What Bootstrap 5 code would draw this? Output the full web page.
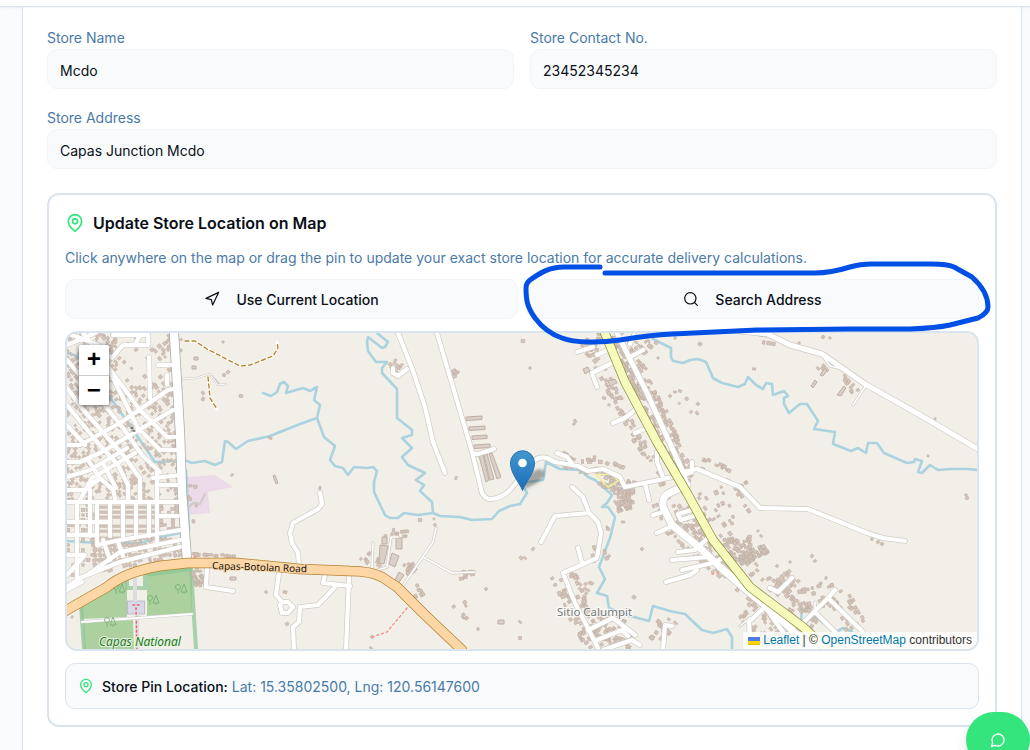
<!DOCTYPE html>
<html lang="en">
<head>
<meta charset="utf-8">
<meta name="viewport" content="width=device-width, initial-scale=1">
<title>Store Settings</title>
<link href="https://cdn.jsdelivr.net/npm/bootstrap@5.3.0/dist/css/bootstrap.min.css" rel="stylesheet">
<style>
:root{--line:#d9e4ee;--soft:#f8fafc;--blue:#4a7aa8;--ink:#0b0f17;--green:#33e57c}
body{font-family:Inter,"Liberation Sans",sans-serif;font-size:14px;line-height:20px;color:var(--ink);background:var(--soft)}
.topbar{height:7px;background:#fff;border-bottom:1px solid var(--line);box-shadow:0 1px 2px rgba(30,60,90,.06);position:relative}
.page-wrap{padding:0 8px 0 22px}
.panel{background:#fff;border:solid var(--line);border-width:0 1px;padding:20px 24px 0}
.field-label{display:block;line-height:22px;color:var(--blue)}
.field-input{height:40px;padding:2px 12px 0;border:1px solid #f1f5f9;border-radius:10px;background:var(--soft);font-size:14px;color:var(--ink)}
.field-grid{row-gap:18px}
.map-card{margin-top:24px;padding:16px;border:2px solid var(--line);border-radius:12px}
.map-title{font-size:16px;line-height:24px;font-weight:600}
.map-help{margin:12px 0 10px;line-height:22px;color:var(--blue)}
.soft-btn{height:40px;padding:0;border:1px solid #f1f5f9;border-radius:10px;background:var(--soft);font-size:14px;font-weight:500;color:var(--ink)}
.soft-btn span{padding-top:2px}
.ico{fill:none;stroke:currentColor;stroke-width:2;stroke-linecap:round;stroke-linejoin:round;flex:none}
.soft-btn .ico{stroke-width:1.8}
.pin-ico{color:var(--green)}
.marker-line{left:0;top:0;overflow:visible;pointer-events:none;z-index:5}
.map-box{height:320px;margin-top:12px;border:2px solid var(--line);border-radius:12px;background:#f2efe9}
.zoom-ctl{left:12px;top:12px;width:30px;border-radius:2px;box-shadow:0 1px 5px rgba(0,0,0,.65)}
.zoom-ctl button{height:30px;padding:2px 0 0;border:0;background:#fff;color:#000;font:bold 24px/28px "Liberation Mono",monospace;border-radius:2px}
.zoom-ctl button+button{border-top:1px solid #ccc;border-radius:0 0 2px 2px}
.credit{right:0;bottom:0;padding:0 5px;background:rgba(255,255,255,.8);font:12px/17px "Liberation Sans",sans-serif;color:#333}
.credit a{color:#0078a8;text-decoration:none}
.pin-box{margin-top:12px;padding:12px;border:1px solid var(--line);border-radius:10px;background:var(--soft)}
.pin-text{line-height:18px;padding-top:2px;color:var(--blue)}
.pin-text strong{font-weight:500;color:var(--ink)}
.chat-btn{right:0;bottom:-18px;width:64px;height:56px;border:0;border-radius:28px;background:var(--green);color:#fff;box-shadow:0 8px 14px rgba(0,0,0,.12);z-index:10}
/* map drawing */
.ground .lines path,.ground .lines use{fill:none;stroke-linecap:round;stroke-linejoin:round}
.water{stroke:#aad3df;stroke-width:2.6}
.casing{stroke:#cfccc7}.street{stroke:#fff}
.place{font-family:"Noto Sans","Open Sans",sans-serif;paint-order:stroke;stroke-linejoin:round}
</style>
</head>
<body>
<div class="d-flex flex-column min-vh-100">
<header class="topbar"></header>
<div class="page-wrap d-flex flex-column flex-grow-1">
<main class="panel flex-grow-1">
<div class="row gx-3 field-grid">
  <div class="col-6"><label class="field-label" for="name">Store Name</label><input class="field-input w-100 d-block" id="name" type="text" value="Mcdo"></div>
  <div class="col-6"><label class="field-label" for="phone">Store Contact No.</label><input class="field-input w-100 d-block" id="phone" type="text" value="23452345234"></div>
  <div class="col-12"><label class="field-label" for="addr">Store Address</label><input class="field-input w-100 d-block" id="addr" type="text" value="Capas Junction Mcdo"></div>
</div>
<section class="map-card">
  <div class="d-flex align-items-center gap-2">
    <svg class="ico pin-ico" width="20" height="20" viewBox="0 0 24 24"><path d="M20 10c0 6-8 12-8 12s-8-6-8-12a8 8 0 0 1 16 0Z"/><circle cx="12" cy="10" r="3"/></svg>
    <h2 class="map-title m-0">Update Store Location on Map</h2>
  </div>
  <p class="map-help">Click anywhere on the map or drag the pin to update your exact store location for accurate delivery calculations.</p>
  <div class="d-flex gap-2 position-relative">
    <button type="button" class="soft-btn flex-fill w-50 d-flex align-items-center justify-content-center gap-3"><svg class="ico" width="16" height="16" viewBox="0 0 24 24"><path d="M3 11 22 2l-9 19-2-8-8-2z"/></svg><span>Use Current Location</span></button>
    <button type="button" class="soft-btn flex-fill w-50 d-flex align-items-center justify-content-center gap-3"><svg class="ico" width="16" height="16" viewBox="0 0 24 24"><circle cx="11" cy="11" r="8.5"/><path d="m21.500 21.500-4.300-4.300"/></svg><span>Search Address</span></button>
    <svg class="marker-line position-absolute w-100 h-100" viewBox="65 279 914 40" preserveAspectRatio="none"><path fill="none" stroke="#0050e6" stroke-width="5" stroke-linecap="round" stroke-linejoin="round" d="M600 267H564C549 267 540 273 530 280Q526 283 526 288C526 302 528 308 535 318C541 326 550 334 562 338C575 343 600 343 620 340Q650 335 672 334L757 330 850 329 910 329Q936 328 950 325L978 318Q988 313 988 307C988 297 982 286 972 277L954 267Q947 264 932 264H872Q860 264 850 267C837 271 828 273 815 273H605"/></svg>
  </div>
  <div class="map-box position-relative overflow-hidden">
  <svg class="ground w-100 h-100 d-block" viewBox="67 333 910 316" preserveAspectRatio="xMidYMid slice">
    <rect x="67" y="333" width="910" height="316" fill="#f2efe9"/>
    <polygon points="187,477 215,475 233,487 208,492 210,513 188,515" fill="#ebdbe8"/>
    <g fill="#add19e"><polygon points="80,603 127,577 127,617 81,619"/><polygon points="147,572 192,567 192,613 147,616"/><polygon points="83,622 133,620 134,649 84,649"/></g>
    <path d="M84 649 81 604 127 579V588H145V575L191 569 196 649" fill="none" stroke="#8fc596" stroke-width="4" stroke-opacity=".75"/>
    <rect x="127.500" y="601" width="17" height="13" fill="#dad9e8" stroke="#b4b0c4" stroke-width=".8"/>
    <g class="lines">
    <path d="M135 577V600M137 614V649" stroke="#ddd" stroke-width="4"/><path d="M133 605h7M136 608 137 649" stroke="#f25e5e" stroke-width="1.500" stroke-dasharray="1.500 3"/>
    <path d="M82 622 192 614" stroke="#ccc" stroke-width="3"/><path d="M82 622 192 614" stroke="#fff" stroke-width="1.800"/>
    </g>
    <g stroke="#79b079" stroke-width=".9" fill="none">
      <g id="trees"><circle cx="116" cy="587" r="2.500"/><path d="M116 590v4M122 584l-3 8h6zM122 592v2"/></g>
      <use href="#trees" x="34" y="11"/><use href="#trees" x="62" y="0"/><use href="#trees" x="-9" y="33"/>
    </g>
    <g class="water lines">
      <path d="M67 353 77 356 110 397 133 430 155 462 177 461 187 461 192 463 205 461 215 465 222 462 225 441 228 442 236 449 248 441 270 436 300 424 317 418"/>
      <path d="M263 393 271 396 277 392 280 384 284 382 288 386 286 393 303 388 310 391 317 387 314 400 320 405 317 418 324 437 335 446 330 460 335 466 343 468 348 475 354 467 367 468 373 467 377 471 374 482 374 492 385 515 390 518 398 518 404 513 418 515 433 513 440 516 460 517 472 520 492 519 499 511 510 506 520 504 527 493 523 486 528 482 543 480 546 462 560 469 580 470 588 477 595 480 612 495 607 503 602 507 608 507 615 517 610 538 599 567 605 579 597 593 607 596 609 608 630 616 649 621 653 606 670 611 685 614 702 630 713 633 727 629 732 637V650"/>
      <path d="M377 333 388 342 385 347 382 348 368 337 367 342 368 351 376 362 387 362 382 368V373L397 389V418L412 430V435L402 438 412 448 402 457 408 465 425 473 416 480 424 485 420 491 432 502 433 513"/>
      <path d="M653 339 671 348V357L673 361 683 363 690 360 698 359 706 362 713 378 722 383 738 387 745 384 748 377 756 385 763 389 766 383 772 384 773 395 784 391 788 396 784 398V404L789 413 800 404 807 404 818 421 814 429 835 432 833 444 851 451 858 448 866 453 868 443 877 443 884 453 907 463 914 462 915 459 922 461 918 472 922 473 930 465 938 470 950 469 967 469 978 470"/>
      <path d="M67 541 97 543 140 543 160 537 180 533"/><path d="M801 620 802 609 812 613 823 623M836 632 843 628 852 632M186 470 189 530"/>
    </g>
    <g id="houses" fill="#d3c5bb" stroke="#bfaea2" stroke-width=".6"></g>
    <g fill="#d9d0c9" stroke="#bfaea2" stroke-width="1">
      <path d="M466 417l16-1v3.500l-16 1zM469 427l16-1v3.500l-16 1zM472 436l15-1v3.500l-15 1zM474 445l16-1v3.500l-16 1zM479 456l4-1 6 25-3 2zM484 455l3-1 7 25-4 1zM489 454l3-1 9 24-4 2z"/>
      <path d="M380 545l8 1-4 18-5-1zM396 538h6v11h-6zM392 553l7 3-4 11-6-3zM382 537h5v7h-5zM399 572l5 3-6 9-4-2zM811 386l4-6 2 2-4 6zM820 375l5-7 2 2-4 6zM837 395l7-9 2 2-5 8zM230 577h6v3h-6zM498 620h6v4h-6zM273 476l2-1 3 8-2 1zM194 357h4v3h-4zM192 366h4v3h-4zM583 369l5-2 2 4-5 3zM608 381l7-2 2 4-7 3z"/>
    </g>
    <path d="M596 475 608 487 618 481 612 474Z" fill="none" stroke="#f3ee9c" stroke-width="1.500"/>
    <g class="lines">
    <path d="M182 379 196 378 210 374 218 385 226 384M211 375l8 9M188 508l5-5 7 1 5-10" stroke="#cfcbc6" stroke-width="2"/><path d="M182 379 196 378 210 374 218 385 226 384" stroke="#fff" stroke-width="1"/>
    <path d="M185 341 195 341 207 349 240 366 250 365 273 356 278 348 277 342M208 377 210 398 217 409" stroke="#fff" stroke-width="2.600"/><path d="M185 341 195 341 207 349 240 366 250 365 273 356 278 348 277 342M208 377 210 398 217 409" stroke="#b08a34" stroke-width="1.400" stroke-dasharray="4 3"/>
    <path d="M407 608 387 632 372 637M712 574 720 572M166 551 168 551M194 557h4" stroke="#f58c80" stroke-width="1.300" stroke-dasharray="2 3"/>
    <defs>
      <path id="thin" d="M436 528 433 542 402 587M423 557 452 573 475 572M373 543 372 568M398 537H391L387 567 378 570M865 387 853 405M822 355 830 366 838 368M815 611 815 602M750 618 740 626"/>
      <path id="small" d="M398 333 412 368 425 407 433 442 445 473M407 369 398 376 393 373V368M437 333 453 387 472 452 482 493Q486 500 492 499 502 498 510 490L535 460Q540 456 547 458L555 462 578 466 588 471 603 469 620 477 625 487 673 477 683 472 697 469 740 487 760 508 808 509 867 533 883 538 905 541M472 453 478 454 494 449M557 453 567 457 573 465M320 493 322 504 318 509 293 523 290 533 292 543 298 553 299 565M325 575 323 583 350 586M349 577 346 650M335 587 318 605 300 607 299 622 293 627 294 650M207 568 206 587 233 591M279 573 276 595 282 602 288 602 293 607 288 613 282 613 280 605 282 602M572 487 583 497 589 513M541 542 555 516 589 513 598 522 601 533 597 558 563 573 575 603 598 648M578 548 582 563M588 630 613 618 635 635M597 640 622 630 628 636M603 650 632 640 640 645M663 650 665 625 672 626M653 515 663 512M657 533 670 527M678 552 695 550 708 538M672 560 708 557M682 570 713 563 723 558M666 582 690 575 697 570M692 510 678 514 681 520 697 515M645 483 649 500M577 352 593 347M597 387 592 373 612 363M613 423 625 418 635 410M635 433 647 428M657 452V462L663 477M643 350 630 357M692 462V472L684 475M630 344 634 335M597 355 608 350M770 588 778 592 792 578M803 623 828 598 835 590M828 598 863 632M750 640 749 622 765 607 783 632M815 612 837 634"/>
      <path id="mid" d="M617 333 647 393 683 472 687 485M740 331 768 334 790 345 822 354 865 384 920 415 978 449"/>
      <path id="grid" d="M83 333 140 410 167 437H177M110 372 138 428 160 450H177M67 360 98 397 123 428 142 455 160 472M67 388 85 412 123 455 140 478V500M67 405 97 442 118 465 128 485V500M67 425 85 445M67 445H80L120 423 168 390 178 388M67 462H80L100 453 173 410H178M67 477 90 470 127 448M80 500 92 478 135 453M67 490H85L100 478 113 490 116 502M104 465 116 488M88 460 100 478M67 502H180M67 522H110M67 535H97M157 470V502M157 485H182M153 478 182 475M77 502V580M90 490V536M97 505V545M110 502V536M123 502V536M136 502V536M149 502V536M157 502V545M157 516H178M87 575 120 552 180 540M67 587 80 578 120 562 180 547M67 555H85M97 545 120 540 180 530M110 560 103 540M123 556 118 542M67 575 85 555M67 590 82 582M113 335H148V345H123L112 358 100 350M140 335 135 345M149 357 150 398M158 365H175M167 375V385M98 345 67 333M67 345 95 333"/>
      <path id="ns" d="M174 333 180 433 182 492 187 560"/>
      <path id="se" d="M687 485 667 494Q662 498 663 507L672 525 700 548 720 567 750 593 767 607 790 628 812 650"/>
      <path id="orange" d="M60 614 107 587Q125 572 160 566L187 563H237L300 569 350 571Q370 571 382 577L397 587 423 613 462 650"/>
      <path id="yellow" d="M604 331 625 382 657 442 687 493 713 540 750 587 767 600 803 627 828 650"/>
    </defs>
    <g class="casing"><use href="#thin" stroke-width="3"/><use href="#small" stroke-width="5.600"/><use href="#mid" stroke-width="6.500"/><use href="#grid" stroke-width="5.200"/><use href="#ns" stroke-width="10" stroke="#aaa"/><use href="#se" stroke-width="8.500"/></g>
    <g class="street"><use href="#thin" stroke-width="1.600"/><use href="#small" stroke-width="4.200"/><use href="#mid" stroke-width="5"/><use href="#grid" stroke-width="4.200"/><use href="#ns" stroke-width="8.500"/><use href="#se" stroke-width="7"/></g>
    <use href="#orange" stroke="#b5812d" stroke-width="10.500"/><use href="#orange" stroke="#fcd6a4" stroke-width="9"/>
    <use href="#yellow" stroke="#8b8f3a" stroke-width="9.500"/><use href="#yellow" stroke="#f6fabb" stroke-width="8"/>
    <path d="M131 428h2M133 431h2" stroke="#222" stroke-width="1"/>
    </g>
    <g class="place">
      <text x="212" y="569" font-size="10" transform="rotate(2 212 569)" fill="#111" stroke="#fcd6a4" stroke-width="2">Capas-Botolan Road</text>
      <text x="99" y="646" font-size="12" font-style="italic" fill="#1b7a1b" stroke="#e9f3e4" stroke-width="2">Capas National</text>
      <text x="557" y="616" font-size="11.500" fill="#777" stroke="#fff" stroke-opacity=".7" stroke-width="2.500">Sitio Calumpit</text>
    </g>
    <defs><linearGradient id="pinfill" x1="0" y1="0" x2="0" y2="1"><stop offset="0" stop-color="#4498d0"/><stop offset="1" stop-color="#1a6cb8"/></linearGradient><filter id="haze"><feGaussianBlur stdDeviation="1.800"/></filter></defs>
    <path d="M523 490 529 476Q537 466 544 471 546 476 537 483Z" fill="#333" fill-opacity=".4" filter="url(#haze)"/>
    <path d="M522.500 490.500C520.500 484 510.500 474 510.500 463A12 12.300 0 0 1 534.500 463C534.500 474 524.500 484 522.500 490.500Z" fill="url(#pinfill)" stroke="#2b72ad" stroke-width="1"/><circle cx="522.500" cy="463" r="4.300" fill="#fff"/>
  </svg>
  <div class="zoom-ctl position-absolute d-flex flex-column"><button type="button" aria-label="Zoom in">+</button><button type="button" aria-label="Zoom out">−</button></div>
  <div class="credit position-absolute"><svg width="12" height="8" viewBox="0 0 12 8"><path fill="#4c7be1" d="M0 0h12v4H0z"/><path fill="#ffd500" d="M0 4h12v3H0z"/><path fill="#e0bc00" d="M0 7h12v1H0z"/></svg> <a href="#">Leaflet</a> | © <a href="#">OpenStreetMap</a> contributors</div>
  </div>
  <div class="pin-box d-flex align-items-center gap-2">
    <svg class="ico pin-ico" width="16" height="16" viewBox="0 0 24 24"><path d="M20 10c0 6-8 12-8 12s-8-6-8-12a8 8 0 0 1 16 0Z"/><circle cx="12" cy="10" r="3"/></svg>
    <div class="pin-text"><strong>Store Pin Location:</strong> Lat: 15.35802500, Lng: 120.56147600</div>
  </div>
</section>
</main>
</div>
</div>
<button type="button" class="chat-btn position-fixed d-flex align-items-center justify-content-center p-0" aria-label="Chat"><svg class="ico" width="16" height="16" viewBox="0 0 24 24"><path d="M7.900 20A9 9 0 1 0 4 16.100L2 22Z"/></svg></button>
<script src="https://cdn.jsdelivr.net/npm/bootstrap@5.3.0/dist/js/bootstrap.bundle.min.js"></script>
<script>
// Building footprints: scattered along streets and inside town blocks.
let seed = 7;
const rnd = () => (seed = (seed * 16807) % 2147483647) / 2147483647;
const out = [];
function house(x, y, a, s) {
  const w = s * (0.7 + rnd() * 0.8), h = s * (0.7 + rnd() * 0.6);
  out.push(`<rect x="${(-w/2).toFixed(1)}" y="${(-h/2).toFixed(1)}" width="${w.toFixed(1)}" height="${h.toFixed(1)}" transform="translate(${x.toFixed(1)} ${y.toFixed(1)}) rotate(${a.toFixed(0)})"/>`);
}
// [points, spread, houses per pixel, nearest distance]
const rows = [
  [[590,333, 612,363, 625,392, 657,450, 680,487], 16, .85, 6],
  [[617,333, 647,393, 683,472], 10, .9, 3],
  [[583,336, 600,342], 10, .8, 0], [[636,340, 650,350], 8, .6, 0],
  [[690,500, 715,540, 745,577, 775,600, 810,628], 17, .9, 5],
  [[663,500, 672,525, 700,548, 730,575], 11, .5, 4],
  [[722,552, 752,548], 12, 1.5, 0], [[740,560, 768,547], 5, 1.6, 0],
  [[555,458, 580,465, 603,465, 622,475], 8, .6, 3],
  [[600,478, 618,486], 7, 1.3, 0], [[615,490, 634,492], 11, 3, 0], [[620,500, 626,510], 7, 2, 0],
  [[563,573, 575,603, 598,648], 12, .8, 3],
  [[600,560, 597,545], 7, .4, 2], [[582,580, 592,590], 8, .5, 0],
  [[595,622, 635,640], 13, 1.3, 0], [[655,640, 665,622, 675,630], 7, .8, 2],
  [[745,605, 780,645], 14, 1.2, 3], [[780,590, 795,575], 9, 1.1, 2],
  [[800,600, 835,592, 855,628], 12, .7, 2], [[790,605, 815,625], 8, .6, 2],
  [[755,336, 775,340], 5, .4, 2], [[697,462, 745,482], 7, .35, 4], [[740,485, 755,510], 7, .3, 3],
  [[392,362, 400,370], 5, .8, 0], [[452,370, 456,377], 4, .8, 0],
  [[362,555, 380,568], 7, .5, 0], [[405,560, 412,572], 5, 1, 0], [[415,585, 422,600], 5, .4, 0],
  [[386,532, 412,536], 4, .4, 0], [[455,600, 470,622], 7, .25, 0], [[455,577, 475,574], 4, .4, 0],
  [[820,366, 826,372], 3, .7, 0], [[845,376, 856,392], 5, .5, 0],
  [[192,558, 235,560], 5, .8, 3], [[195,570, 202,585], 6, 1.8, 0],
  [[660,390, 690,420], 18, .08, 4], [[700,480, 720,530], 18, .25, 6],
  [[190,480, 193,535], 6, .12, 0]
];
for (const [p, spread, dens, near] of rows)
  for (let i = 0; i + 3 < p.length; i += 2) {
    const dx = p[i+2]-p[i], dy = p[i+3]-p[i+1], len = Math.hypot(dx, dy), ang = Math.atan2(dy, dx);
    for (let k = 0; k < len * dens; k++) {
      const t = rnd(), d = (near + rnd() * (spread - near)) * (rnd() < .5 ? -1 : 1);
      house(p[i] + dx*t - Math.sin(ang)*d, p[i+1] + dy*t + Math.cos(ang)*d, ang*180/Math.PI, 2.9);
    }
  }
// Western town blocks
for (let y = 334; y < 500; y += 3.8)
  for (let x = 67; x < 180; x += 4)
    if (rnd() < .46 && !(x > 118 && x < 158 && y < 385 && rnd() < .85)) house(x + rnd()*2, y + rnd()*2, 52, 2.8);
for (let y = 540; y < 572; y += 5)
  for (let x = 95; x < 182; x += 5)
    if (y < 574 - (x - 95) * .2 && rnd() < .8) house(x, y, -18, 3.4);
for (let y = 500; y < 600; y += 5)
  for (let x = 68; x < 95; x += 5)
    if (y < 650 - x && rnd() < .4) house(x, y, 0, 3.2);
for (const y of [507, 512, 517, 526, 531, 538])
  for (let x = 98; x < 156; x += 13) out.push(`<rect x="${x+1.5}" y="${y-1}" width="9" height="2.2"/>`);
for (let y = 505; y < 533; y += 4) for (let x = 161; x < 180; x += 4) if (rnd() < .5) house(x, y, 0, 3);
// Isolated farm buildings
for (const [x, y] of [[523,341],[530,368],[574,424],[575,421],[223,342],[203,393],[203,399],[241,396],[224,375],[228,372],[270,438],[232,475],[456,478],[320,488],[420,520],[434,519],[435,525],[521,558],[525,558],[642,549],[623,522],[607,527],[608,529],[609,556],[634,597],[533,549],[520,622],[520,638],[670,396],[675,392],[680,391],[691,412],[697,413],[656,343],[675,338],[700,344],[823,337],[830,338],[799,343],[754,369],[935,419],[928,456],[966,495],[967,498],[872,539],[878,542],[882,544],[758,531],[761,536],[812,556],[815,561],[790,562],[777,566],[826,578],[478,629],[372,637],[371,648],[486,589],[266,592],[287,624],[72,617],[285,592],[604,398],[609,405],[658,358]])
  house(x, y, rnd() * 60, 2.6);
document.getElementById('houses').innerHTML = out.join('');
</script>
</body>
</html>
